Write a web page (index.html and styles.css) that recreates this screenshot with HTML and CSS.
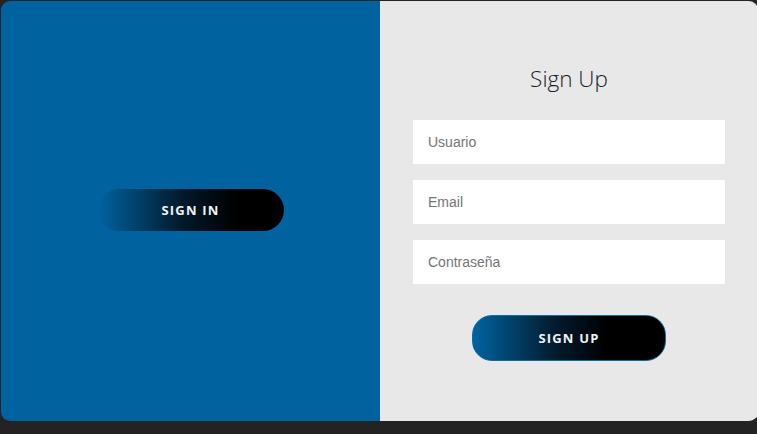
FILE: index.html
```html
<!DOCTYPE html>
<html lang="es">
<head>
<meta charset="utf-8">
<title>Sign Up</title>
<link rel="stylesheet" href="styles.css">
</head>
<body>
<div class="card">
  <section class="panel panel-left">
    <button class="btn btn-signin" type="button">Sign In</button>
  </section>
  <section class="panel panel-right">
    <h1 class="title">Sign Up</h1>
    <form class="form">
      <input class="field" type="text" placeholder="Usuario">
      <input class="field" type="email" placeholder="Email">
      <input class="field" type="password" placeholder="Contraseña">
      <button class="btn btn-signup" type="button">Sign Up</button>
    </form>
  </section>
</div>
</body>
</html>
```
FILE: styles.css
```css
html, body {
  margin: 0;
  padding: 0;
  background: #232323;
  height: 100%;
  overflow: hidden;
}
body {
  padding: 1px 0 0 1px;
  box-sizing: border-box;
}
.card {
  display: flex;
  width: 757px;
  height: 420px;
  border-radius: 9px;
  overflow: hidden;
}
.panel-left {
  flex: 0 0 379px;
  background: #0063a0;
  display: flex;
  align-items: center;
  justify-content: center;
}
.panel-right {
  flex: 1 1 auto;
  background: #e8e8e8;
  display: flex;
  flex-direction: column;
  align-items: center;
}
.title {
  margin: 62px 0 0;
  font-family: "Open Sans", sans-serif;
  font-weight: 300;
  font-size: 22.5px;
  line-height: 32px;
  color: #1c1c2a;
}
.form {
  display: flex;
  flex-direction: column;
  align-items: center;
  margin-top: 25px;
  gap: 16px;
}
.field {
  box-sizing: border-box;
  width: 312px;
  height: 44px;
  border: none;
  outline: none;
  background: #fff;
  padding: 0 15px;
  font-family: "Liberation Sans", Arial, sans-serif;
  font-size: 14px;
  color: #333;
}
.field::placeholder {
  color: #757575;
}
.btn {
  font-family: "Open Sans", sans-serif;
  font-weight: 700;
  font-size: 13px;
  letter-spacing: 1.2px;
  text-transform: uppercase;
  color: #f2f2f2;
  cursor: pointer;
}
.btn-signin {
  width: 186px;
  height: 42px;
  margin: 0 0 2px 0;
  border: none;
  border-radius: 21px;
  background: linear-gradient(to right, #0063a0 0%, #011a2c 45%, #000 75%);
}
.btn-signup {
  margin-top: 15px;
  width: 194px;
  height: 46px;
  border: 1px solid #0f6aa6;
  border-radius: 20px;
  background: linear-gradient(to right, #0063a0 0%, #021c30 42%, #000 70%);
}
```
